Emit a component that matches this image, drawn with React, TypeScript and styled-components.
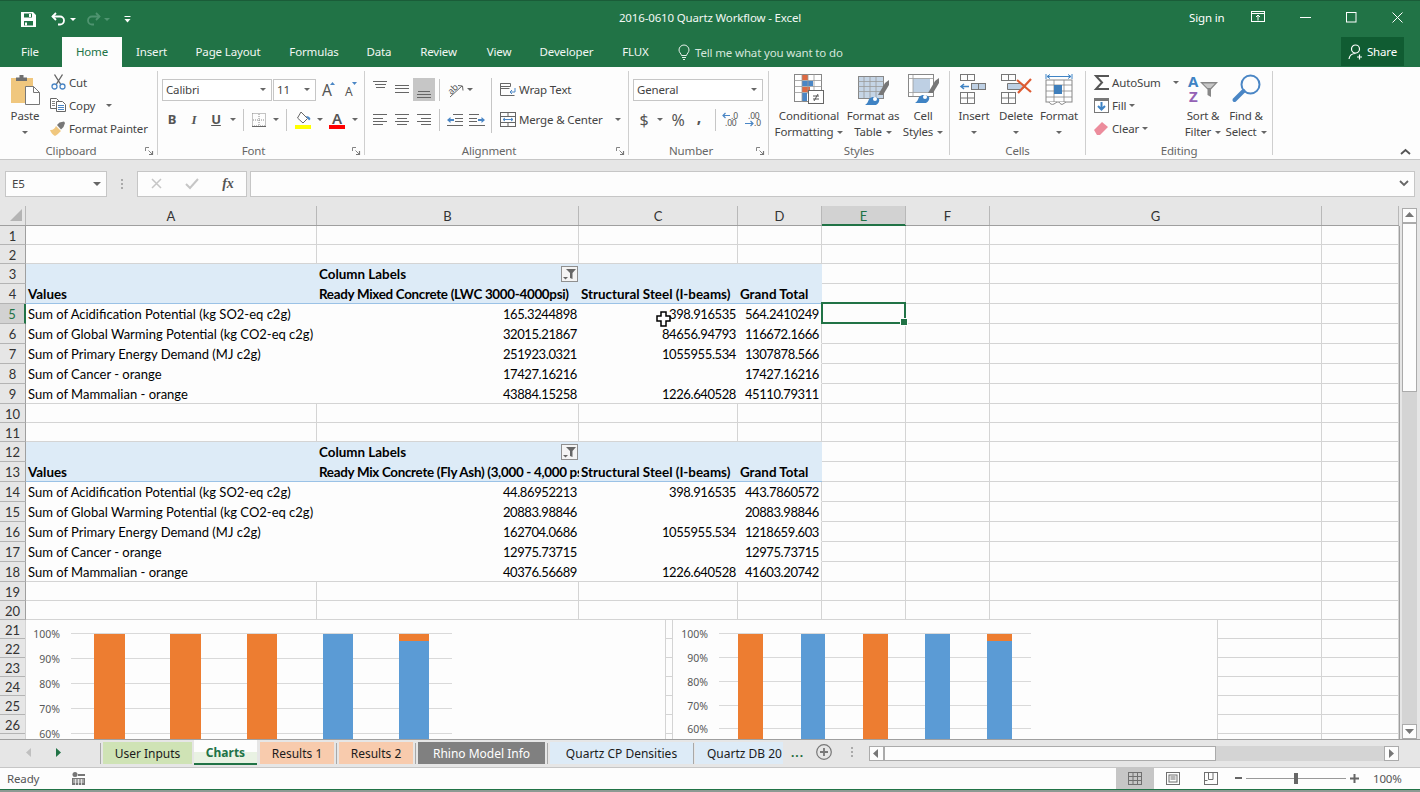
import React from "react";
import styled, { createGlobalStyle } from "styled-components";

const UI_FONT = '"Noto Sans", "Open Sans", sans-serif';
const CELL_FONT = 'Lato, "Noto Sans", sans-serif';
const GREEN = "#217346";
const COLUMNS = "26px 291px 262px 159px 84px 84px 84px 332px 77px";

const GlobalStyle = createGlobalStyle`
  html, body { margin: 0; padding: 0; background: #e6e6e6; }
  * { box-sizing: border-box; }
  svg { display: block; flex: none; overflow: visible; }
`;

const Window = styled.div`
  width: 1420px;
  height: 792px;
  overflow: hidden;
  display: flex;
  flex-direction: column;
  font-family: ${UI_FONT};
  font-size: 11.5px;
  letter-spacing: -0.15px;
  color: #444;
`;

/* title bar */
const TitleBar = styled.div`
  height: 37px;
  flex: none;
  background: ${GREEN};
  border-top: 1px solid #1a5c38;
  display: grid;
  grid-template-columns: 1fr auto 1fr;
  align-items: center;
  color: #fff;
`;
const Qat = styled.div`
  display: flex;
  align-items: center;
  padding-left: 21px;
`;
const QatSlot = styled.div<{ $w: number }>`
  width: ${(p) => p.$w}px;
  display: flex;
  align-items: center;
`;
const Title = styled.div`
  color: #f2f7f4;
  padding-bottom: 4px;
`;
const WindowControls = styled.div`
  display: flex;
  align-items: center;
  justify-content: flex-end;
  padding-bottom: 4px;
`;
const SignIn = styled.span`
  width: 36px;
  margin-right: 26px;
  white-space: nowrap;
`;
const WinButton = styled.div<{ $w: number; $ml?: number }>`
  width: ${(p) => p.$w}px;
  margin-left: ${(p) => p.$ml ?? 0}px;
  display: flex;
  justify-content: center;
`;

/* ribbon tabs */
const TabRow = styled.div`
  height: 30px;
  flex: none;
  background: ${GREEN};
  display: flex;
  align-items: stretch;
  color: #f2f7f4;
`;
const RibbonTab = styled.div<{ $w: number; $active?: boolean }>`
  width: ${(p) => p.$w}px;
  padding-bottom: 1px;
  display: flex;
  align-items: center;
  justify-content: center;
  white-space: nowrap;
  background: ${(p) => (p.$active ? "#fdfdfd" : "transparent")};
  color: ${(p) => (p.$active ? GREEN : "inherit")};
`;
const TellMe = styled.div`
  display: flex;
  align-items: center;
  gap: 5px;
  margin-left: 14px;
  color: #d5e6dc;
  flex: 1;
`;
const ShareButton = styled.div`
  width: 63px;
  height: 29px;
  margin-right: 16px;
  background: #105c32;
  color: #fff;
  display: flex;
  align-items: center;
  justify-content: center;
  gap: 3px;
`;

/* ribbon */
const Ribbon = styled.div`
  height: 93px;
  flex: none;
  background: #fdfdfd;
  border-bottom: 1px solid #c6c6c6;
  display: flex;
  position: relative;
`;
const Group = styled.div<{ $w: number }>`
  width: ${(p) => p.$w}px;
  height: 84px;
  margin-top: 4px;
  flex: none;
  border-right: 1px solid #cfcfcf;
  display: flex;
  flex-direction: column;
  position: relative;
`;
const GroupBody = styled.div<{ $pl?: number; $pt?: number; $column?: boolean }>`
  height: 73px;
  flex: none;
  display: flex;
  flex-direction: ${(p) => (p.$column ? "column" : "row")};
  padding-left: ${(p) => p.$pl ?? 0}px;
  padding-top: ${(p) => p.$pt ?? 0}px;
`;
const GroupLabel = styled.div<{ $launcher?: boolean }>`
  height: 11px;
  line-height: 14px;
  text-align: center;
  color: #666;
  padding-right: ${(p) => (p.$launcher ? 15 : 0)}px;
`;
const Launcher = styled.div`
  position: absolute;
  right: 4px;
  bottom: 0;
`;
const Collapse = styled.div`
  position: absolute;
  right: 9px;
  bottom: 4px;
`;
const LargeButton = styled.div<{ $w: number }>`
  width: ${(p) => p.$w}px;
  display: flex;
  flex-direction: column;
  align-items: center;
  line-height: 16px;
  color: #444;
  white-space: nowrap;
`;
const LargeIcon = styled.div<{ $pt?: number }>`
  height: 37px;
  padding-top: ${(p) => p.$pt ?? 3}px;
  display: flex;
  justify-content: center;
`;
const LabelLine = styled.div`
  height: 16px;
  display: flex;
  align-items: center;
  gap: 4px;
`;
const SmallColumn = styled.div<{ $w: number }>`
  width: ${(p) => p.$w}px;
  flex: none;
  display: flex;
  flex-direction: column;
`;
const SmallRow = styled.div`
  height: 23px;
  padding-bottom: 1px;
  display: flex;
  align-items: center;
  gap: 3px;
  white-space: nowrap;
`;
const SmallIcon = styled.div`
  width: 16px;
  display: flex;
  justify-content: center;
`;
const Caret = styled.span<{ $ml?: number; $size?: number; $color?: string }>`
  display: inline-block;
  width: 0;
  height: 0;
  flex: none;
  margin-left: ${(p) => p.$ml ?? 0}px;
  border-left: ${(p) => p.$size ?? 3}px solid transparent;
  border-right: ${(p) => p.$size ?? 3}px solid transparent;
  border-top: ${(p) => p.$size ?? 3}px solid ${(p) => p.$color ?? "#666"};
`;
const ToolRow = styled.div<{ $pl?: number; $mt?: number }>`
  height: 23px;
  display: flex;
  align-items: center;
  padding-left: ${(p) => p.$pl ?? 0}px;
  margin-top: ${(p) => p.$mt ?? 0}px;
`;
const Slot = styled.div<{ $w: number; $selected?: boolean }>`
  width: ${(p) => p.$w}px;
  height: 23px;
  flex: none;
  display: flex;
  align-items: center;
  justify-content: center;
  background: ${(p) => (p.$selected ? "#c6c6c6" : "transparent")};
`;
const GlyphText = styled.span<{ $size?: number; $bold?: boolean; $italic?: boolean; $underline?: boolean; $font?: string; $raise?: number }>`
  font-size: ${(p) => p.$size ?? 13}px;
  font-weight: ${(p) => (p.$bold ? 700 : 400)};
  font-style: ${(p) => (p.$italic ? "italic" : "normal")};
  text-decoration: ${(p) => (p.$underline ? "underline" : "none")};
  font-family: ${(p) => p.$font ?? "inherit"};
  margin-bottom: ${(p) => p.$raise ?? 0}px;
  color: #555;
  line-height: 1;
`;
const ToolSep = styled.div<{ $l: number; $r: number }>`
  width: 1px;
  height: 22px;
  flex: none;
  background: #c6c6c6;
  margin-left: ${(p) => p.$l}px;
  margin-right: ${(p) => p.$r}px;
`;
const Combo = styled.div<{ $w: number; $ml?: number }>`
  width: ${(p) => p.$w}px;
  height: 22px;
  flex: none;
  margin-left: ${(p) => p.$ml ?? 0}px;
  border: 1px solid #c6c6c6;
  background: #fff;
  display: flex;
  align-items: center;
  justify-content: space-between;
  padding: 0 5px 0 3px;
`;
const TextRow = styled.div<{ $mb?: number }>`
  height: 23px;
  display: flex;
  align-items: center;
  gap: 3px;
  padding-left: 5px;
  margin-bottom: ${(p) => p.$mb ?? 7}px;
  white-space: nowrap;
`;
const TallSep = styled.div`
  width: 1px;
  height: 55px;
  margin: 0 3px 0 3px;
  background: #c6c6c6;
  flex: none;
`;
const Stack = styled.div`
  display: flex;
  flex-direction: column;
`;

/* formula bar */
const FormulaBar = styled.div`
  height: 46px;
  flex: none;
  background: #e6e6e6;
  display: flex;
  align-items: center;
  padding: 1px 5px 0 5px;
`;
const NameBox = styled.div`
  width: 102px;
  height: 26px;
  background: #fdfdfd;
  border: 1px solid #c6c6c6;
  display: flex;
  align-items: center;
  justify-content: space-between;
  padding: 0 5px 0 6px;
  color: #444;
`;
const GripDots = styled.div<{ $mx?: number }>`
  width: 2px;
  height: 10px;
  margin: 0 ${(p) => p.$mx ?? 0}px;
  background: repeating-linear-gradient(#aaa 0 2px, transparent 2px 4px);
`;
const FxBox = styled.div`
  width: 110px;
  height: 26px;
  background: #fdfdfd;
  border: 1px solid #c6c6c6;
  display: flex;
  align-items: center;
`;
const FxSlot = styled.div`
  width: 36px;
  display: flex;
  justify-content: center;
`;
const FormulaInput = styled.div`
  flex: 1;
  height: 26px;
  margin-left: 3px;
  background: #fdfdfd;
  border: 1px solid #c6c6c6;
  display: flex;
  align-items: center;
  justify-content: flex-end;
  padding-right: 5px;
`;

/* sheet */
const Sheet = styled.div`
  height: 533px;
  flex: none;
  display: flex;
  background: #e6e6e6;
`;
const GridArea = styled.div`
  width: 1400px;
  position: relative;
  overflow: hidden;
  font-family: ${CELL_FONT};
  font-size: 13px;
  letter-spacing: 0;
  color: #000;
`;
const HeaderRow = styled.div`
  height: 20px;
  display: grid;
  grid-template-columns: ${COLUMNS};
  background: #e6e6e6;
  border-bottom: 1px solid #9f9f9f;
  margin-right: 1px;
`;
const Corner = styled.div`
  display: flex;
  align-items: flex-end;
  justify-content: flex-end;
  padding: 0 3px 4px 0;
  border-right: 1px solid #b8b8b8;
`;
const ColumnHead = styled.div<{ $selected?: boolean }>`
  display: flex;
  align-items: center;
  justify-content: center;
  border-right: 1px solid #b8b8b8;
  background: ${(p) => (p.$selected ? "#d2d2d2" : "transparent")};
  color: ${(p) => (p.$selected ? GREEN : "#333")};
  box-shadow: ${(p) => (p.$selected ? `0 1px 0 ${GREEN}, inset 0 -1px 0 ${GREEN}` : "none")};
`;
const SheetRow = styled.div<{ $h: number }>`
  height: ${(p) => p.$h}px;
  display: grid;
  grid-template-columns: ${COLUMNS};
  background: #fdfdfd;
  border-right: 1px solid #9f9f9f;
`;
const RowHead = styled.div<{ $selected?: boolean }>`
  padding-top: 1px;
  display: flex;
  align-items: center;
  justify-content: center;
  background: ${(p) => (p.$selected ? "#d2d2d2" : "#e6e6e6")};
  color: ${(p) => (p.$selected ? GREEN : "#333")};
  border-right: ${(p) => (p.$selected ? `2px solid ${GREEN}` : "1px solid #9f9f9f")};
  border-bottom: 1px solid #b4b4b4;
`;
const Cell = styled.div<{
  $pivot?: boolean;
  $plain?: boolean;
  $bottom?: string;
  $right?: boolean;
  $bold?: boolean;
  $tight?: boolean;
  $selected?: boolean;
}>`
  position: relative;
  min-width: 0;
  padding: 1px 2px 0;
  display: flex;
  align-items: center;
  justify-content: ${(p) => (p.$right ? "flex-end" : "flex-start")};
  white-space: nowrap;
  overflow: ${(p) => (p.$selected ? "visible" : "hidden")};
  font-size: ${(p) => (p.$bold ? 13.4 : 13)}px;
  font-weight: ${(p) => (p.$bold ? 700 : 400)};
  letter-spacing: ${(p) => (p.$right ? -0.4 : p.$tight ? -0.3 : 0)}px;
  background: ${(p) => (p.$pivot ? "#ddebf7" : "transparent")};
  border-right: ${(p) => (p.$pivot || p.$plain ? "none" : "1px solid #d4d4d4")};
  border-bottom: 1px solid ${(p) => p.$bottom ?? "#d4d4d4"};
`;
const Selection = styled.div`
  position: absolute;
  left: -1px;
  top: -2px;
  right: -1px;
  bottom: -1px;
  border: 2px solid ${GREEN};
  z-index: 2;
  &::after {
    content: "";
    position: absolute;
    right: -4px;
    bottom: -4px;
    width: 6px;
    height: 6px;
    background: ${GREEN};
    border: 1px solid #fff;
  }
`;
const FilterButton = styled.div`
  position: absolute;
  right: 1px;
  top: 2px;
  width: 17px;
  height: 16px;
  background: #f4f4f4;
  border: 1px solid #8f8f8f;
  display: flex;
  align-items: center;
  justify-content: center;
`;
const ChartFrame = styled.div<{ $left: number; $w: number }>`
  position: absolute;
  left: ${(p) => p.$left}px;
  top: 414px;
  width: ${(p) => p.$w}px;
  height: 120px;
  background: #fdfdfd;
  border-left: 1px solid #d4d4d4;
  border-right: 1px solid #d4d4d4;
  z-index: 1;
`;
const MouseCursor = styled.div`
  position: absolute;
  left: 656px;
  top: 105px;
  z-index: 3;
`;
const VScroll = styled.div`
  width: 20px;
  padding: 2px 3px 0 2px;
  display: flex;
  flex-direction: column;
`;
const ScrollButton = styled.div<{ $w?: number; $h?: number }>`
  width: ${(p) => p.$w ?? 15}px;
  height: ${(p) => p.$h ?? 15}px;
  flex: none;
  background: #fdfdfd;
  border: 1px solid #ababab;
  display: flex;
  align-items: center;
  justify-content: center;
`;
const VThumb = styled.div`
  height: 169px;
  flex: none;
  background: #fdfdfd;
  border: 1px solid #ababab;
`;
const VTrack = styled.div`
  flex: 1;
  background: #d4d4d4;
`;

/* sheet tabs */
const TabBar = styled.div`
  height: 28px;
  flex: none;
  background: #e6e6e6;
  border-top: 1px solid #9f9f9f;
  display: flex;
  align-items: flex-start;
  font-size: 12px;
  letter-spacing: 0;
`;
const NavArrows = styled.div`
  width: 100px;
  height: 24px;
  flex: none;
  display: flex;
  align-items: center;
  padding-left: 25px;
  gap: 20px;
`;
const TabSep = styled.div<{ $l?: number; $r?: number }>`
  width: 1px;
  height: 21px;
  flex: none;
  margin: 3px ${(p) => p.$r ?? 2}px 0 ${(p) => p.$l ?? 2}px;
  background: #a8a8a8;
`;
const SheetTab = styled.div<{ $w: number; $bg: string; $color?: string; $ml?: number; $pl?: number }>`
  width: ${(p) => p.$w}px;
  height: 22px;
  margin-top: 2px;
  margin-left: ${(p) => p.$ml ?? 0}px;
  padding-left: ${(p) => p.$pl ?? 0}px;
  flex: none;
  background: ${(p) => p.$bg};
  color: ${(p) => p.$color ?? "#1b1b1b"};
  display: flex;
  align-items: center;
  justify-content: ${(p) => (p.$pl ? "flex-start" : "center")};
  white-space: nowrap;
  overflow: hidden;
`;
const ActiveTab = styled.div`
  width: 63px;
  height: 25px;
  margin-left: 2px;
  padding-top: 1px;
  flex: none;
  background: linear-gradient(#fdfdfd 0 12px, #e9f2e3 12px);
  border-bottom: 2px solid ${GREEN};
  color: ${GREEN};
  font-weight: 700;
  display: flex;
  align-items: center;
  justify-content: center;
`;
const MoreTabs = styled.div`
  width: 33px;
  height: 24px;
  flex: none;
  padding-left: 8px;
  display: flex;
  align-items: center;
  color: #1a6b3c;
  font-weight: 700;
  letter-spacing: 1px;
`;
const AddSheet = styled.div`
  width: 53px;
  height: 24px;
  flex: none;
  display: flex;
  align-items: center;
  gap: 19px;
`;
const HScroll = styled.div`
  width: 530px;
  height: 15px;
  margin-top: 6px;
  flex: none;
  display: flex;
`;
const HThumb = styled.div`
  width: 332px;
  flex: none;
  background: #fdfdfd;
  border: 1px solid #ababab;
`;

/* status bar */
const StatusBar = styled.div`
  height: 22px;
  flex: none;
  background: #fdfdfd;
  border-top: 1px solid #c6c6c6;
  display: flex;
  align-items: center;
  padding-left: 7px;
  color: #555;
`;
const StatusText = styled.div`
  width: 65px;
`;
const StatusRight = styled.div`
  margin-left: auto;
  display: flex;
  align-items: center;
  height: 100%;
`;
const ViewButton = styled.div<{ $active?: boolean }>`
  width: 38px;
  height: 100%;
  display: flex;
  align-items: center;
  justify-content: center;
  background: ${(p) => (p.$active ? "#c6c6c6" : "transparent")};
`;
const ZoomMinus = styled.div`
  margin-left: 5px;
`;
const Slider = styled.div`
  width: 100px;
  height: 1px;
  margin: 0 4px;
  background: #999;
  position: relative;
`;
const SliderThumb = styled.div`
  position: absolute;
  left: 48px;
  top: -5px;
  width: 4px;
  height: 11px;
  background: #666;
`;
const ZoomLevel = styled.div`
  width: 61px;
  padding-left: 14px;
`;
const BottomEdge = styled.div`
  height: 3px;
  flex: none;
  background: #8d9a93;
  border-top: 1px solid ${GREEN};
`;

/* icons */
const BLUE = "#4a86c5";

const SaveIcon = () => (
  <svg width="15" height="15" viewBox="0 0 15 15">
    <path fillRule="evenodd" fill="#fff" d="M0 0h12l3 3v12H0zM3 1.500v4h8v-4zM3 9v4.500h9V9z" />
    <rect x="8" y="2" width="2" height="3" fill="#fff" />
    <rect x="4" y="10.500" width="2" height="3" fill="#fff" />
  </svg>
);
const UndoIcon = ({ color }: { color: string }) => (
  <svg width="15" height="14" viewBox="0 0 15 14" fill="none" stroke={color} strokeWidth="1.800">
    <path d="M5 1 1.500 4.500 5 8" />
    <path d="M1.500 4.500H9a4 4 0 0 1 0 8H7" />
  </svg>
);
const RedoIcon = ({ color }: { color: string }) => (
  <svg width="15" height="14" viewBox="0 0 15 14" fill="none" stroke={color} strokeWidth="1.800">
    <path d="M10 1l3.500 3.500L10 8" />
    <path d="M13.500 4.500H6a4 4 0 0 0 0 8h2" />
  </svg>
);
const CustomizeIcon = () => (
  <svg width="7" height="7" viewBox="0 0 7 7" fill="#fff">
    <rect x="0.500" y="0" width="6" height="1" />
    <path d="M0.500 3h6L3.500 6.500z" />
  </svg>
);
const DisplayIcon = () => (
  <svg width="14" height="12" viewBox="0 0 14 12" fill="none" stroke="#fff">
    <rect x="0.500" y="0.500" width="13" height="10" />
    <path d="M0.500 2.500h13M7 9.500V4.500M5 6l2-2 2 2" />
  </svg>
);
const MinimizeIcon = () => (
  <svg width="11" height="3" viewBox="0 0 11 3"><rect y="1" width="11" height="1" fill="#fff" /></svg>
);
const MaximizeIcon = () => (
  <svg width="11" height="11" viewBox="0 0 11 11" fill="none" stroke="#fff"><rect x="0.500" y="0.500" width="9.500" height="9.500" /></svg>
);
const CloseIcon = () => (
  <svg width="11" height="11" viewBox="0 0 11 11" stroke="#fff"><path d="M0.500 0.500l10 10M10.500 0.500l-10 10" /></svg>
);
const BulbIcon = () => (
  <svg width="12" height="15" viewBox="0 0 12 15" fill="none" stroke="#e6f0ea">
    <path d="M3.500 10.500C3.200 8.500 1 7.500 1 5a5 5 0 0 1 10 0c0 2.500-2.200 3.500-2.500 5.500z" />
    <path d="M4 12.500h4M5 14.500h2" />
  </svg>
);
const ShareIcon = () => (
  <svg width="16" height="16" viewBox="0 0 16 16" fill="none" stroke="#fff" strokeWidth="1.200">
    <circle cx="7.500" cy="5" r="4" />
    <path d="M1 15c.5-3.500 2.700-5.500 6.500-5.500M11.500 10.500v5M9 13h5" />
  </svg>
);
const PasteIcon = () => (
  <svg width="29" height="31" viewBox="0 0 29 31">
    <rect x="0" y="4" width="22" height="25" fill="#f0c77e" />
    <path d="M5 7V3.500h3.500V1h4v2.500H16V7z" fill="#6f6f6f" />
    <path d="M14.500 12.500h8l6 6v12h-14z" fill="#fff" stroke="#777" />
    <path d="M22.500 12.500v6h6" fill="none" stroke="#777" />
  </svg>
);
const CutIcon = () => (
  <svg width="15" height="16" viewBox="0 0 15 16" fill="none">
    <path d="M3.500 0.500 9.500 10M11.500 0.500 5.500 10" stroke="#666" strokeWidth="1.400" />
    <circle cx="3.500" cy="12.500" r="2.500" stroke={BLUE} strokeWidth="1.300" />
    <circle cx="11.500" cy="12.500" r="2.500" stroke={BLUE} strokeWidth="1.300" />
  </svg>
);
const CopyIcon = () => (
  <svg width="16" height="14" viewBox="0 0 16 14" fill="#fff" stroke="#666">
    <path d="M0.500 0.500h6l2 2v8h-8z" />
    <path d="M6.500 3.500h6l3 3v7h-9z" />
    <path d="M2 3.500h3M2 5.500h3M2 7.500h3" strokeWidth="0.800" />
    <path d="M8 7.500h6M8 9.500h6M8 11.500h6" stroke={BLUE} />
  </svg>
);
const PainterIcon = () => (
  <svg width="16" height="15" viewBox="0 0 16 15">
    <path d="M0 9c3 .5 5-2 6-4l5 5c-2 2-3 3-6 5-2-1-4-3-5-6z" fill="#f0c77e" />
    <path d="M7 4 9.500 1.500 14 0.500 15 2 13.500 6 11 8.500z" fill="#777" />
  </svg>
);
const LauncherIcon = () => (
  <svg width="8" height="8" viewBox="0 0 8 8" fill="none" stroke="#777">
    <path d="M0.500 4V0.500H4M7.500 7.500l-4-4" strokeWidth="0.900" />
    <path d="M7.500 4v3.500H4" strokeWidth="1.200" />
  </svg>
);
const GrowFont = ({ up }: { up: boolean }) => (
  <svg width="18" height="17" viewBox="0 0 18 17">
    <text x={up ? 2 : 3} y="15" fontSize={up ? 15.500 : 12} fontFamily="Noto Sans" fill="#555">A</text>
    <path d={up ? "M10 4l2.500-3L15 4z" : "M10 1h5l-2.500 3z"} fill={BLUE} />
  </svg>
);
const BordersIcon = () => (
  <svg width="14" height="14" viewBox="0 0 14 14" fill="none" stroke="#888" strokeDasharray="1 1">
    <rect x="0.500" y="0.500" width="13" height="12.500" />
    <path d="M7 1v12M1 7h12" />
    <path d="M0 13.500h14" stroke="#666" strokeDasharray="none" />
  </svg>
);
const FillIcon = () => (
  <svg width="16" height="18" viewBox="0 0 16 18">
    <path d="M6 1l6.500 6.500-4.500 4.500L2.500 7z" fill="#fff" stroke="#666" />
    <path d="M11 5c2 0 4 1 4.500 3l-1.500 1.500z" fill={BLUE} />
    <rect x="0" y="14" width="16" height="4" fill="#ffff00" />
  </svg>
);
const FontColorIcon = () => (
  <svg width="16" height="18" viewBox="0 0 16 18">
    <text x="3" y="12.500" fontSize="15" fontFamily="Noto Sans" fontWeight="600" fill="#555">A</text>
    <rect x="0" y="14" width="16" height="4" fill="#ff0000" />
  </svg>
);
const LinesIcon = ({ lines }: { lines: [number, number, number][] }) => (
  <svg width="16" height="23" viewBox="0 0 16 23" stroke="#666">
    {lines.map(([a, b, y]) => (
      <path key={`${a}-${y}`} d={`M${a} ${y}.5H${b}`} />
    ))}
  </svg>
);
const OrientationIcon = () => (
  <svg width="17" height="16" viewBox="0 0 17 16" fill="none">
    <text x="1" y="11" fontSize="9" fontFamily="Noto Sans" fill="#555" transform="rotate(-45 5 8)">ab</text>
    <path d="M3 15 15 4M11 3.500l4.500.5.500 4.500" stroke="#666" />
  </svg>
);
const IndentIcon = ({ flip }: { flip?: boolean }) => (
  <svg width="16" height="14" viewBox="0 0 16 14">
    <g transform={flip ? "matrix(-1 0 0 1 16 0)" : undefined}>
      <path d="M6 1.500h10M8 5.500h8M8 8.500h8M0 12.500h16" stroke="#666" fill="none" />
      <path d="M0 7l3.500-3v2H7v2H3.500v2z" fill={BLUE} />
    </g>
  </svg>
);
const WrapIcon = () => (
  <svg width="16" height="15" viewBox="0 0 16 15" fill="none" stroke="#666">
    <path d="M0.500 1.500h10v3h-10zM0.500 6.500h9M0.500 13.500h14M0.500 1.500v12" />
    <path d="M15 6v4h-5M12 8l-2 2 2 2" stroke={BLUE} />
  </svg>
);
const MergeIcon = () => (
  <svg width="16" height="15" viewBox="0 0 16 15" fill="none" stroke="#666">
    <rect x="0.500" y="0.500" width="15" height="14" />
    <path d="M0.500 4.500h15M0.500 10.500h15M8 0.500v4M8 10.500v4" />
    <path d="M3 7.500h10M5 6 3 7.500 5 9M11 6l2 1.500L11 9" stroke={BLUE} />
  </svg>
);
const DecimalIcon = ({ more }: { more: boolean }) => (
  <svg width="18" height="17" viewBox="0 0 18 17">
    {more ? (
      <>
        <text x="10" y="7.500" fontSize="8.500" fontFamily="Noto Sans" fill="#555">.0</text>
        <text x="4" y="15" fontSize="8.500" fontFamily="Noto Sans" fill="#555">.00</text>
        <path d="M9 4.500H2M4.500 2 2 4.500 4.500 7" stroke={BLUE} strokeWidth="1.200" fill="none" />
      </>
    ) : (
      <>
        <text x="5" y="7.500" fontSize="8.500" fontFamily="Noto Sans" fill="#555">.00</text>
        <text x="11" y="15" fontSize="8.500" fontFamily="Noto Sans" fill="#555">.0</text>
        <path d="M2 12.500h8M7.500 10l2.500 2.500L7.500 15" stroke={BLUE} strokeWidth="1.200" fill="none" />
      </>
    )}
  </svg>
);
const ConditionalIcon = () => (
  <svg width="30" height="31" viewBox="0 0 30 31">
    <rect x="0.500" y="0.500" width="27" height="27" fill="#fff" stroke="#888" />
    <rect x="8" y="1" width="6" height="5" fill="#de6a42" />
    <rect x="8" y="7" width="11" height="5" fill="#4a86c5" />
    <rect x="8" y="13" width="8" height="5" fill="#de6a42" />
    <rect x="8" y="19" width="5" height="8" fill="#4a86c5" />
    <path d="M8 0v28M14 0v20M20 0v16M0.500 6.500h27M0.500 12.500h27M0.500 18.500h27" stroke="#999" strokeWidth="0.800" />
    <rect x="14.500" y="16.500" width="15" height="13" fill="#fff" stroke="#666" />
    <path d="M19 22h6M19 25h6M24 20l-4 7" stroke="#555" fill="none" />
  </svg>
);
const TableBrushIcon = ({ full }: { full: boolean }) => (
  <svg width="31" height="30" viewBox="0 0 31 30">
    <rect x="0.500" y="0.500" width="25" height="22" fill={full ? "#c5d5e6" : "#fff"} stroke="#888" />
    {full ? (
      <path d="M0.500 5.500h25M0.500 10.500h25M0.500 15.500h25M6 1v21M12 1v21M18 1v21" stroke="#9a9a9a" strokeWidth="0.800" />
    ) : (
      <>
        <rect x="5" y="4.500" width="17" height="14" fill="#bed0e4" />
        <path d="M0.500 4.500h25M5 1v21M0.500 18.500h25" stroke="#9a9a9a" strokeWidth="0.800" />
      </>
    )}
    <path d="M20 19l7-12 4-3v5l-6 10z" fill="#777" />
    <path d="M7 29c2-1 3-3 4-6 3-3 8-2 10 0 1 2-1 5-3 6z" fill="#3f83c4" />
    <circle cx="17" cy="23" r="2" fill="#fff" />
  </svg>
);
const InsertIcon = () => (
  <svg width="28" height="30" viewBox="0 0 28 30" fill="none" stroke="#777">
    <rect x="0.500" y="0.500" width="14" height="6" />
    <path d="M7.500 0.500v6" />
    <rect x="11.500" y="9.500" width="14" height="6" fill="#bed0e4" />
    <path d="M18.500 9.500v6" />
    <rect x="0.500" y="18.500" width="14" height="11" />
    <path d="M7.500 18.500v11M0.500 24h14" />
    <path d="M9 12.500H1M4 10 1 12.500 4 15" stroke="#3f83c4" strokeWidth="1.500" />
  </svg>
);
const DeleteIcon = () => (
  <svg width="31" height="30" viewBox="0 0 31 30" fill="none" stroke="#777">
    <rect x="0.500" y="0.500" width="14" height="6" />
    <path d="M7.500 0.500v6" />
    <path d="M6.500 9.500H20l5 3-5 3H6.500z" fill="#bed0e4" />
    <rect x="0.500" y="18.500" width="14" height="11" />
    <path d="M7.500 18.500v11M0.500 24h14" />
    <path d="M16 6l14 12M30 5 17 19" stroke="#de5b32" strokeWidth="2.200" />
  </svg>
);
const FormatCellsIcon = () => (
  <svg width="28" height="31" viewBox="0 0 28 31" fill="none" stroke="#888">
    <path d="M1 0v5M27 0v5M2 2.500h24M5 0.500l-3 2 3 2M23 0.500l3 2-3 2" stroke="#3f83c4" />
    <rect x="1" y="6" width="26" height="22" fill="#fff" />
    <path d="M1 11h26M1 17h26M1 23h26M9 6v22M19 6v22" strokeWidth="0.800" />
    <rect x="9" y="11" width="8" height="9" fill="#3f7fbc" stroke="none" />
    <path d="M4 28c1 2 3 3 5 2l3-2M14 28c1 2 3 3 4 2l3-2" fill="#fff" />
  </svg>
);
const SigmaIcon = () => (
  <svg width="15" height="15" viewBox="0 0 15 15" fill="none" stroke="#555" strokeWidth="2">
    <path d="M15 1H2l6 6.500L2 14h13" />
  </svg>
);
const FillDownIcon = () => (
  <svg width="15" height="15" viewBox="0 0 15 15">
    <rect x="0.500" y="0.500" width="14" height="14" fill="#fff" stroke="#777" />
    <rect x="0" y="0" width="15" height="3" fill="#777" />
    <path d="M7.500 4v7M4 8l3.500 3.500L11 8" stroke="#3f83c4" strokeWidth="2" fill="none" />
  </svg>
);
const EraserIcon = () => (
  <svg width="14" height="13" viewBox="0 0 14 13">
    <path d="M0 8 8 0l6 5-8 8H3z" fill="#ec8c9c" />
  </svg>
);
const SortIcon = () => (
  <svg width="31" height="30" viewBox="0 0 31 30">
    <text x="0" y="13" fontSize="15" fontWeight="700" fontFamily="Noto Sans" fill="#3f83c4">A</text>
    <text x="1" y="28" fontSize="15" fontWeight="700" fontFamily="Noto Sans" fill="#9462b5">Z</text>
    <path d="M12 8h18l-7 7.500V23l-3.500-2v-5.500z" fill="#888" />
    <path d="M15 9.500h12l-4.500 4.500h-3z" fill="#c8c8c8" />
  </svg>
);
const FindIcon = () => (
  <svg width="29" height="29" viewBox="0 0 29 29" fill="none" stroke="#4a86c5">
    <circle cx="18.500" cy="10.500" r="9" strokeWidth="2" />
    <path d="M11.500 17 2.500 26" strokeWidth="4" strokeLinecap="round" />
  </svg>
);
const ChevronUp = () => (
  <svg width="11" height="7" viewBox="0 0 11 7" fill="none" stroke="#555" strokeWidth="1.800"><path d="M1 6l4.500-4L10 6" /></svg>
);
const ChevronDown = () => (
  <svg width="10" height="7" viewBox="0 0 10 7" fill="none" stroke="#666" strokeWidth="1.800"><path d="M1 1l4 4 4-4" /></svg>
);
const CrossIcon = () => (
  <svg width="11" height="11" viewBox="0 0 11 11" stroke="#c6c6c6" strokeWidth="1.500"><path d="M1 1l9 9M10 1l-9 9" /></svg>
);
const CheckIcon = () => (
  <svg width="14" height="11" viewBox="0 0 14 11" fill="none" stroke="#c6c6c6" strokeWidth="2"><path d="M1 6l4 4 8-9" /></svg>
);
const CornerIcon = () => (
  <svg width="12" height="12" viewBox="0 0 12 12"><path d="M12 0v12H0z" fill="#b4b4b4" /></svg>
);
const FilterGlyph = () => (
  <svg width="13" height="11" viewBox="0 0 13 11">
    <path d="M3 0h10L9.500 4v6l-2.500-1V4z" fill="#666" />
    <path d="M0 8h5L2.500 10.500z" fill="#666" />
  </svg>
);
const PlusCursor = () => (
  <svg width="15" height="16" viewBox="0 0 15 16">
    <path d="M5 1h5v4h4v5h-4v5H5v-5H1V5h4z" fill="#fff" stroke="#000" strokeWidth="1.500" />
  </svg>
);
const Arrow = ({ dir, color = "#777" }: { dir: "up" | "down" | "left" | "right"; color?: string }) => {
  const d = { up: "M0 6 4.500 1 9 6z", down: "M0 2h9L4.500 7z", left: "M6 0v9L1 4.500z", right: "M2 0v9l5-4.500z" }[dir];
  return (
    <svg width="9" height="9" viewBox="0 0 9 9"><path d={d} fill={color} /></svg>
  );
};
const MacroIcon = () => (
  <svg width="13" height="13" viewBox="0 0 13 13">
    <circle cx="3" cy="2.500" r="2.500" fill="#777" />
    <path d="M6 2h7v2H6zM0 6h13v7H0z" fill="#777" />
    <path d="M1 8h11M1 10h11M3.500 7v6M6.500 7v6M9.500 7v6" stroke="#fff" strokeWidth="0.700" />
  </svg>
);
const NormalViewIcon = () => (
  <svg width="14" height="13" viewBox="0 0 14 13" fill="none" stroke="#6f6f6f">
    <rect x="0.500" y="0.500" width="13" height="12" />
    <path d="M5 1v11M9.500 1v11M1 4.500h12M1 8.500h12" />
  </svg>
);
const LayoutViewIcon = () => (
  <svg width="14" height="13" viewBox="0 0 14 13" fill="none" stroke="#6f6f6f">
    <rect x="0.500" y="0.500" width="13" height="12" />
    <rect x="3" y="3" width="8" height="7" />
    <path d="M4.500 5h5M4.500 7h5" />
  </svg>
);
const BreakViewIcon = () => (
  <svg width="14" height="13" viewBox="0 0 14 13" fill="none" stroke="#6f6f6f">
    <rect x="0.500" y="0.500" width="13" height="12" />
    <path d="M4.500 0.500v7h4.500v-7M0.500 8.500h3" />
  </svg>
);
const AddSheetIcon = () => (
  <svg width="16" height="16" viewBox="0 0 16 16" fill="none" stroke="#777">
    <circle cx="8" cy="8" r="7.300" strokeWidth="1.200" />
    <path d="M8 4v8M4 8h8" strokeWidth="1.800" />
  </svg>
);
const MinusGlyph = () => (
  <svg width="7" height="3" viewBox="0 0 7 3"><rect width="7" height="2" fill="#666" /></svg>
);
const PlusGlyph = () => (
  <svg width="9" height="9" viewBox="0 0 9 9"><path d="M3.500 0h2v3.500H9v2H5.500V9h-2V5.500H0v-2h3.500z" fill="#666" /></svg>
);

/* bar chart, drawn to scale in the frame's own pixels */
type Bar = { x: number; w: number; split?: boolean; color: string };
type ChartProps = { width: number; labelX: number; lineX: [number, number]; lineYs: number[]; bars: Bar[] };

const BarChart = ({ width, labelX, lineX, lineYs, bars }: ChartProps) => (
  <svg width={width} height="120" viewBox={`0 0 ${width} 120`}>
    {lineYs.map((y, i) => (
      <g key={y}>
        <line x1={lineX[0]} x2={lineX[1]} y1={y} y2={y} stroke="#d9d9d9" />
        <text x={labelX} y={y + 4} textAnchor="end" fontSize="10.500" fontFamily="Noto Sans" fill="#595959">
          {100 - i * 10}%
        </text>
      </g>
    ))}
    {bars.map((b) => (
      <g key={b.x}>
        <rect x={b.x} y={14} width={b.w} height={106} fill={b.color} />
        {b.split && <rect x={b.x} y={14} width={b.w} height={7} fill="#ed7d31" />}
      </g>
    ))}
  </svg>
);

const ORANGE = "#ed7d31";
const BAR_BLUE = "#5b9bd5";

const chartOne: ChartProps = {
  width: 638,
  labelX: 34,
  lineX: [45, 426],
  lineYs: [13.500, 38.500, 63.500, 88.500, 113.500],
  bars: [
    { x: 68, w: 31, color: ORANGE },
    { x: 144, w: 31, color: ORANGE },
    { x: 221, w: 30, color: ORANGE },
    { x: 297, w: 30, color: BAR_BLUE },
    { x: 373, w: 30, color: BAR_BLUE, split: true },
  ],
};
const chartTwo: ChartProps = {
  width: 543,
  labelX: 35,
  lineX: [46, 358],
  lineYs: [13.500, 37.500, 61.500, 85.500, 108.500],
  bars: [
    { x: 65, w: 25, color: ORANGE },
    { x: 128, w: 24, color: BAR_BLUE },
    { x: 190, w: 25, color: ORANGE },
    { x: 252, w: 25, color: BAR_BLUE },
    { x: 314, w: 25, color: BAR_BLUE, split: true },
  ],
};

/* sheet data */
const columnNames = ["A", "B", "C", "D", "E", "F", "G"];
const pivotOne = [
  ["Sum of Acidification Potential (kg SO2-eq c2g)", "165.3244898", "398.916535", "564.2410249"],
  ["Sum of Global Warming Potential (kg CO2-eq c2g)", "32015.21867", "84656.94793", "116672.1666"],
  ["Sum of Primary Energy Demand (MJ c2g)", "251923.0321", "1055955.534", "1307878.566"],
  ["Sum of Cancer - orange", "17427.16216", "", "17427.16216"],
  ["Sum of Mammalian - orange", "43884.15258", "1226.640528", "45110.79311"],
];
const pivotTwo = [
  ["Sum of Acidification Potential (kg SO2-eq c2g)", "44.86952213", "398.916535", "443.7860572"],
  ["Sum of Global Warming Potential (kg CO2-eq c2g)", "20883.98846", "", "20883.98846"],
  ["Sum of Primary Energy Demand (MJ c2g)", "162704.0686", "1055955.534", "1218659.603"],
  ["Sum of Cancer - orange", "12975.73715", "", "12975.73715"],
  ["Sum of Mammalian - orange", "40376.56689", "1226.640528", "41603.20742"],
];

const TrailingCells = ({ selected }: { selected?: boolean }) => (
  <>
    <Cell $selected={selected}>{selected && <Selection />}</Cell>
    <Cell />
    <Cell />
    <Cell />
  </>
);

const BlankRow = ({ n }: { n: number }) => (
  <SheetRow $h={19}>
    <RowHead>{n}</RowHead>
    <Cell />
    <Cell />
    <Cell />
    <Cell />
    <TrailingCells />
  </SheetRow>
);

const LabelRow = ({ n }: { n: number }) => (
  <SheetRow $h={20}>
    <RowHead>{n}</RowHead>
    <Cell $pivot $bottom="#ddebf7" />
    <Cell $pivot $bold $bottom="#ddebf7">
      Column Labels
      <FilterButton>
        <FilterGlyph />
      </FilterButton>
    </Cell>
    <Cell $pivot $bottom="#ddebf7" />
    <Cell $pivot $bottom="#ddebf7" />
    <TrailingCells />
  </SheetRow>
);

const TitleRow = ({ n, title }: { n: number; title: string }) => (
  <SheetRow $h={20}>
    <RowHead>{n}</RowHead>
    <Cell $pivot $bold $bottom="#9bc2e6">Values</Cell>
    <Cell $pivot $bold $tight $bottom="#9bc2e6">{title}</Cell>
    <Cell $pivot $bold $bottom="#9bc2e6">Structural Steel (I-beams)</Cell>
    <Cell $pivot $bold $bottom="#9bc2e6">Grand Total</Cell>
    <TrailingCells />
  </SheetRow>
);

const DataRow = ({ n, cells, last, selected }: { n: number; cells: string[]; last: boolean; selected?: boolean }) => {
  const bottom = last ? "#d4d4d4" : "transparent";
  return (
    <SheetRow $h={20}>
      <RowHead $selected={selected}>{n}</RowHead>
      <Cell $plain $bottom={bottom}>{cells[0]}</Cell>
      <Cell $plain $right $bottom={bottom}>{cells[1]}</Cell>
      <Cell $plain $right $bottom={bottom}>{cells[2]}</Cell>
      <Cell $right $bottom={bottom}>{cells[3]}</Cell>
      <TrailingCells selected={selected} />
    </SheetRow>
  );
};

const PivotTable = ({ start, title, data, selectedRow }: { start: number; title: string; data: string[][]; selectedRow?: number }) => (
  <>
    <LabelRow n={start} />
    <TitleRow n={start + 1} title={title} />
    {data.map((cells, i) => (
      <DataRow
        key={cells[0]}
        n={start + 2 + i}
        cells={cells}
        last={i === data.length - 1}
        selected={selectedRow === start + 2 + i}
      />
    ))}
  </>
);

const ribbonTabs: [string, number][] = [
  ["Insert", 59],
  ["Page Layout", 94],
  ["Formulas", 78],
  ["Data", 52],
  ["Review", 67],
  ["View", 54],
  ["Developer", 81],
  ["FLUX", 57],
];

const Big = ({ w, icon, lines, pt }: { w: number; icon: React.ReactNode; lines: string[]; pt?: number }) => (
  <LargeButton $w={w}>
    <LargeIcon $pt={pt}>{icon}</LargeIcon>
    {lines.map((l, i) => (
      <LabelLine key={l}>
        {l}
        {i === lines.length - 1 && <Caret />}
      </LabelLine>
    ))}
  </LargeButton>
);

const BigSingle = ({ w, icon, label }: { w: number; icon: React.ReactNode; label: string }) => (
  <LargeButton $w={w}>
    <LargeIcon>{icon}</LargeIcon>
    <LabelLine>{label}</LabelLine>
    <LabelLine>
      <Caret />
    </LabelLine>
  </LargeButton>
);

export default function App() {
  return (
    <Window>
      <GlobalStyle />
      <TitleBar>
        <Qat>
          <QatSlot $w={30}><SaveIcon /></QatSlot>
          <QatSlot $w={19}><UndoIcon color="#fff" /></QatSlot>
          <QatSlot $w={16}><Caret $color="#fff" /></QatSlot>
          <QatSlot $w={18}><RedoIcon color="#4f9470" /></QatSlot>
          <QatSlot $w={20}><Caret $color="#4f9470" /></QatSlot>
          <QatSlot $w={10}><CustomizeIcon /></QatSlot>
        </Qat>
        <Title>2016-0610 Quartz Workflow - Excel</Title>
        <WindowControls>
          <SignIn>Sign in</SignIn>
          <WinButton $w={14}><DisplayIcon /></WinButton>
          <WinButton $w={46} $ml={17}><MinimizeIcon /></WinButton>
          <WinButton $w={46}><MaximizeIcon /></WinButton>
          <WinButton $w={46}><CloseIcon /></WinButton>
        </WindowControls>
      </TitleBar>

      <TabRow>
        <RibbonTab $w={60}>File</RibbonTab>
        <RibbonTab $w={2} />
        <RibbonTab $w={60} $active>Home</RibbonTab>
        {ribbonTabs.map(([label, w]) => (
          <RibbonTab key={label} $w={w}>{label}</RibbonTab>
        ))}
        <TellMe>
          <BulbIcon />
          Tell me what you want to do
        </TellMe>
        <ShareButton>
          <ShareIcon />
          Share
        </ShareButton>
      </TabRow>

      <Ribbon>
        <Group $w={158}>
          <GroupBody>
            <LargeButton $w={50}>
              <LargeIcon><PasteIcon /></LargeIcon>
              <LabelLine>Paste</LabelLine>
              <LabelLine><Caret /></LabelLine>
            </LargeButton>
            <SmallColumn $w={104}>
              <SmallRow><SmallIcon><CutIcon /></SmallIcon>Cut</SmallRow>
              <SmallRow><SmallIcon><CopyIcon /></SmallIcon>Copy<Caret $ml={8} /></SmallRow>
              <SmallRow><SmallIcon><PainterIcon /></SmallIcon>Format Painter</SmallRow>
            </SmallColumn>
          </GroupBody>
          <GroupLabel $launcher>Clipboard</GroupLabel>
          <Launcher><LauncherIcon /></Launcher>
        </Group>

        <Group $w={207}>
          <GroupBody $column $pt={7} $pl={3}>
            <ToolRow>
              <Combo $w={110} $ml={1}>Calibri<Caret /></Combo>
              <Combo $w={43} $ml={1}>11<Caret /></Combo>
              <Slot $w={26}><GrowFont up /></Slot>
              <Slot $w={18}><GrowFont up={false} /></Slot>
            </ToolRow>
            <ToolRow $mt={7}>
              <Slot $w={22}><GlyphText $bold>B</GlyphText></Slot>
              <Slot $w={22}><GlyphText $italic $bold $font="Liberation Serif">I</GlyphText></Slot>
              <Slot $w={22}><GlyphText $bold $underline>U</GlyphText></Slot>
              <Slot $w={12}><Caret /></Slot>
              <ToolSep $l={4} $r={4} />
              <Slot $w={22}><BordersIcon /></Slot>
              <Slot $w={12}><Caret /></Slot>
              <ToolSep $l={4} $r={4} />
              <Slot $w={24}><FillIcon /></Slot>
              <Slot $w={9}><Caret /></Slot>
              <Slot $w={25}><FontColorIcon /></Slot>
              <Slot $w={12}><Caret /></Slot>
            </ToolRow>
          </GroupBody>
          <GroupLabel $launcher>Font</GroupLabel>
          <Launcher><LauncherIcon /></Launcher>
        </Group>

        <Group $w={264}>
          <GroupBody $pt={7} $pl={5}>
            <Stack>
              <ToolRow>
                <Slot $w={21}><LinesIcon lines={[[0, 14, 3], [2, 13, 6], [3, 12, 9]]} /></Slot>
                <Slot $w={22}><LinesIcon lines={[[1, 15, 7], [1, 15, 10], [1, 15, 14]]} /></Slot>
                <Slot $w={22} $selected><LinesIcon lines={[[2, 14, 13], [1, 15, 16], [1, 15, 19]]} /></Slot>
                <ToolSep $l={4} $r={4} />
                <Slot $w={22}><OrientationIcon /></Slot>
                <Slot $w={8}><Caret /></Slot>
              </ToolRow>
              <ToolRow $mt={7}>
                <Slot $w={21}><LinesIcon lines={[[0, 14, 6], [0, 10, 10], [0, 14, 13], [0, 10, 16]]} /></Slot>
                <Slot $w={22}><LinesIcon lines={[[1, 15, 6], [3, 13, 10], [1, 15, 13], [3, 13, 16]]} /></Slot>
                <Slot $w={22}><LinesIcon lines={[[1, 15, 6], [5, 15, 10], [1, 15, 13], [5, 15, 16]]} /></Slot>
                <ToolSep $l={4} $r={4} />
                <Slot $w={22}><IndentIcon /></Slot>
                <Slot $w={22}><IndentIcon flip /></Slot>
              </ToolRow>
            </Stack>
            <TallSep />
            <Stack>
              <TextRow><WrapIcon />Wrap Text</TextRow>
              <TextRow $mb={0}><MergeIcon />Merge &amp; Center<Caret $ml={9} /></TextRow>
            </Stack>
          </GroupBody>
          <GroupLabel $launcher>Alignment</GroupLabel>
          <Launcher><LauncherIcon /></Launcher>
        </Group>

        <Group $w={140}>
          <GroupBody $column $pt={7} $pl={4}>
            <ToolRow><Combo $w={130}>General<Caret /></Combo></ToolRow>
            <ToolRow $mt={7}>
              <Slot $w={22}><GlyphText $size={16}>$</GlyphText></Slot>
              <Slot $w={10}><Caret /></Slot>
              <Slot $w={26}><GlyphText $size={16}>%</GlyphText></Slot>
              <Slot $w={16}><GlyphText $size={16} $bold $raise={6}>,</GlyphText></Slot>
              <ToolSep $l={8} $r={3} />
              <Slot $w={22}><DecimalIcon more /></Slot>
              <Slot $w={22}><DecimalIcon more={false} /></Slot>
            </ToolRow>
          </GroupBody>
          <GroupLabel $launcher>Number</GroupLabel>
          <Launcher><LauncherIcon /></Launcher>
        </Group>

        <Group $w={181}>
          <GroupBody $pl={4}>
            <Big w={72} icon={<ConditionalIcon />} lines={["Conditional", "Formatting"]} />
            <Big w={56} pt={5} icon={<TableBrushIcon full />} lines={["Format as", "Table"]} />
            <Big w={44} icon={<TableBrushIcon full={false} />} lines={["Cell", "Styles"]} />
          </GroupBody>
          <GroupLabel>Styles</GroupLabel>
        </Group>

        <Group $w={136}>
          <GroupBody $pl={3}>
            <BigSingle w={42} icon={<InsertIcon />} label="Insert" />
            <BigSingle w={42} icon={<DeleteIcon />} label="Delete" />
            <BigSingle w={44} icon={<FormatCellsIcon />} label="Format" />
          </GroupBody>
          <GroupLabel>Cells</GroupLabel>
        </Group>

        <Group $w={187}>
          <GroupBody $pl={7}>
            <SmallColumn $w={89}>
              <SmallRow><SmallIcon><SigmaIcon /></SmallIcon>AutoSum<Caret $ml={9} /></SmallRow>
              <SmallRow><SmallIcon><FillDownIcon /></SmallIcon>Fill<Caret /></SmallRow>
              <SmallRow><SmallIcon><EraserIcon /></SmallIcon>Clear<Caret /></SmallRow>
            </SmallColumn>
            <Big w={42} icon={<SortIcon />} lines={["Sort &", "Filter"]} />
            <Big w={44} icon={<FindIcon />} lines={["Find &", "Select"]} />
          </GroupBody>
          <GroupLabel>Editing</GroupLabel>
        </Group>
        <Collapse><ChevronUp /></Collapse>
      </Ribbon>

      <FormulaBar>
        <NameBox>E5<Caret $size={4} /></NameBox>
        <GripDots $mx={14} />
        <FxBox>
          <FxSlot><CrossIcon /></FxSlot>
          <FxSlot><CheckIcon /></FxSlot>
          <FxSlot>
            <GlyphText $size={14} $italic $bold $font='"Liberation Serif", serif'>fx</GlyphText>
          </FxSlot>
        </FxBox>
        <FormulaInput><ChevronDown /></FormulaInput>
      </FormulaBar>

      <Sheet>
        <GridArea>
          <HeaderRow>
            <Corner><CornerIcon /></Corner>
            {columnNames.map((c) => (
              <ColumnHead key={c} $selected={c === "E"}>{c}</ColumnHead>
            ))}
            <ColumnHead />
          </HeaderRow>
          <BlankRow n={1} />
          <BlankRow n={2} />
          <PivotTable start={3} title="Ready Mixed Concrete (LWC 3000-4000psi)" data={pivotOne} selectedRow={5} />
          <BlankRow n={10} />
          <BlankRow n={11} />
          <PivotTable start={12} title="Ready Mix Concrete (Fly Ash) (3,000 - 4,000 psi)" data={pivotTwo} />
          {[19, 20, 21, 22, 23, 24, 25, 26, 27].map((n) => (
            <BlankRow key={n} n={n} />
          ))}
          <ChartFrame $left={25} $w={641}><BarChart {...chartOne} /></ChartFrame>
          <ChartFrame $left={672} $w={546}><BarChart {...chartTwo} /></ChartFrame>
          <MouseCursor><PlusCursor /></MouseCursor>
        </GridArea>
        <VScroll>
          <ScrollButton><Arrow dir="up" /></ScrollButton>
          <VThumb />
          <VTrack />
          <ScrollButton><Arrow dir="down" /></ScrollButton>
        </VScroll>
      </Sheet>

      <TabBar>
        <NavArrows>
          <Arrow dir="left" color="#c0c0c0" />
          <Arrow dir="right" color={GREEN} />
        </NavArrows>
        <TabSep $l={0} />
        <SheetTab $w={89} $bg="#cfe3b5">User Inputs</SheetTab>
        <ActiveTab>Charts</ActiveTab>
        <SheetTab $w={74} $bg="#f8cbad" $ml={3}>Results 1</SheetTab>
        <TabSep />
        <SheetTab $w={74} $bg="#f8cbad">Results 2</SheetTab>
        <TabSep />
        <SheetTab $w={127} $bg="#808080" $color="#fff">Rhino Model Info</SheetTab>
        <TabSep />
        <SheetTab $w={143} $bg="#ddebf7">Quartz CP Densities</SheetTab>
        <TabSep $l={0} $r={1} />
        <SheetTab $w={88} $bg="#ddebf7" $pl={12}>Quartz DB 20</SheetTab>
        <MoreTabs>...</MoreTabs>
        <AddSheet>
          <AddSheetIcon />
          <GripDots />
        </AddSheet>
        <HScroll>
          <ScrollButton><Arrow dir="left" /></ScrollButton>
          <HThumb />
          <VTrack />
          <ScrollButton><Arrow dir="right" /></ScrollButton>
        </HScroll>
      </TabBar>

      <StatusBar>
        <StatusText>Ready</StatusText>
        <MacroIcon />
        <StatusRight>
          <ViewButton $active><NormalViewIcon /></ViewButton>
          <ViewButton><LayoutViewIcon /></ViewButton>
          <ViewButton><BreakViewIcon /></ViewButton>
          <ZoomMinus><MinusGlyph /></ZoomMinus>
          <Slider><SliderThumb /></Slider>
          <PlusGlyph />
          <ZoomLevel>100%</ZoomLevel>
        </StatusRight>
      </StatusBar>
      <BottomEdge />
    </Window>
  );
}
